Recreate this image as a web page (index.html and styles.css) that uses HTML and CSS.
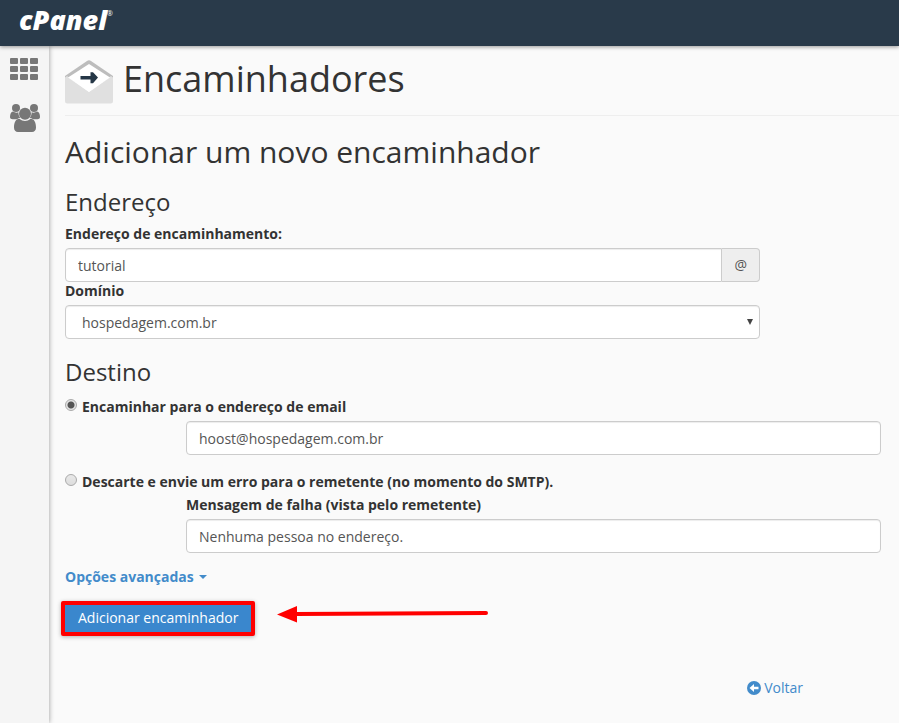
FILE: index.html
```html
<!DOCTYPE html>
<html lang="pt-BR">
<head>
  <meta charset="UTF-8">
  <meta name="viewport" content="width=device-width, initial-scale=1.0">
  <title>cPanel - Encaminhadores</title>
  <link rel="stylesheet" href="styles.css">
</head>
<body>
  <header class="topbar">
    <a class="logo" href="#">cPanel<sup>®</sup></a>
  </header>

  <div class="layout">
    <nav class="sidebar">
      <a href="#" aria-label="Home">
        <svg width="30" height="24" viewBox="0 0 30 24" fill="#777">
          <rect x="0" y="0" width="8" height="6" rx="1"/>
          <rect x="10" y="0" width="8" height="6" rx="1"/>
          <rect x="20" y="0" width="8" height="6" rx="1"/>
          <rect x="0" y="8" width="8" height="6" rx="1"/>
          <rect x="10" y="8" width="8" height="6" rx="1"/>
          <rect x="20" y="8" width="8" height="6" rx="1"/>
          <rect x="0" y="16" width="8" height="6" rx="1"/>
          <rect x="10" y="16" width="8" height="6" rx="1"/>
          <rect x="20" y="16" width="8" height="6" rx="1"/>
        </svg>
      </a>
      <a href="#" aria-label="User Manager">
        <svg width="30" height="30" viewBox="0 0 30 30" fill="#777">
          <circle cx="6" cy="5" r="4"/>
          <circle cx="24" cy="5" r="4"/>
          <path d="M3 8.500C1 8.500 0 11 0 14C0 15.500 1.200 16.200 2.600 16.200H7C8 15.400 9.300 15 10.200 14.800C9 13.300 8.300 11.500 8.400 9.300C6.500 10 4.500 9.500 3 8.500Z"/>
          <path d="M27 8.500C29 8.500 30 11 30 14C30 15.500 28.800 16.200 27.400 16.200H23C22 15.400 20.700 15 19.800 14.800C21 13.300 21.700 11.500 21.600 9.300C23.500 10 25.500 9.500 27 8.500Z"/>
          <circle cx="15" cy="10.800" r="6"/>
          <path d="M9.500 15.800C5.500 15.800 4 20 4 24.500C4 27.400 5.600 29 8 29H22C24.400 29 26 27.400 26 24.500C26 20 24.500 15.800 20.500 15.800C17 18.700 13 18.700 9.500 15.800Z"/>
        </svg>
      </a>
    </nav>

    <main class="content">
      <h1 class="page-title">
        <svg width="48" height="44" viewBox="0 0 48 44">
          <path d="M0 16L22 1Q24 -0.300 26 1L48 16V22H0Z" fill="#bdbdbd"/>
          <path d="M0 17.500L2 16L24 32L46 16L48 17.500V41Q48 43.500 45.500 43.500H2.500Q0 43.500 0 41Z" fill="#e0e0e0"/>
          <path d="M24 4L45 17.500L24 32L3 17.500Z" fill="#fff"/>
          <path d="M15.500 16H25.500V12.300H28L33 17.500L28 23.200H25.500V19.500H15.500Z" fill="#253746"/>
        </svg>
        <span>Encaminhadores</span>
      </h1>

      <h2>Adicionar um novo encaminhador</h2>

      <form>
        <h3>Endereço</h3>
        <div class="field">
          <label for="email">Endereço de encaminhamento:</label>
          <div class="input-group">
            <input class="form-control" type="text" id="email" value="tutorial">
            <span class="addon">@</span>
          </div>
        </div>
        <div class="field">
          <label for="domain">Domínio</label>
          <div class="select-wrap">
            <select class="form-control" id="domain">
              <option>hospedagem.com.br</option>
            </select>
          </div>
        </div>

        <h3>Destino</h3>
        <div class="radio">
          <input type="radio" name="fwdopt" id="fwd" checked>
          <label for="fwd">Encaminhar para o endereço de email</label>
        </div>
        <div class="field nested">
          <input class="form-control" type="text" aria-label="Endereço de email" value="hoost@hospedagem.com.br">
        </div>

        <div class="radio fail">
          <input type="radio" name="fwdopt" id="fail">
          <label for="fail">Descarte e envie um erro para o remetente (no momento do SMTP).</label>
        </div>
        <div class="field nested">
          <label for="failmsg">Mensagem de falha (vista pelo remetente)</label>
          <input class="form-control" type="text" id="failmsg" value="Nenhuma pessoa no endereço.">
        </div>

        <a class="advanced" href="#">Opções avançadas <span class="caret"></span></a>

        <div class="actions">
          <button class="btn-primary" type="submit">Adicionar encaminhador</button>
          <svg class="arrow" width="212" height="20" viewBox="0 0 212 20">
            <path d="M0 10.500L20 2V18.500Z" fill="#f00"/>
            <path d="M18 10L209 9" stroke="#f00" stroke-width="4" stroke-linecap="round"/>
          </svg>
        </div>
      </form>

      <div class="back">
        <a href="#">
          <svg width="14" height="14" viewBox="0 0 14 14">
            <circle cx="7" cy="7" r="7" fill="#428bca"/>
            <path d="M2.500 7L7 3V5.700H11.500V8.300H7V11Z" fill="#fff"/>
          </svg>
          Voltar
        </a>
      </div>
    </main>
  </div>
</body>
</html>
```
FILE: styles.css
```css
* {
  box-sizing: border-box;
}

body {
  margin: 0;
  font-family: "Open Sans", "Liberation Sans", sans-serif;
  font-size: 14px;
  line-height: 20px;
  color: #333;
  background-color: #fafafa;
}

a {
  color: #428bca;
  text-decoration: none;
}

svg {
  display: block;
  flex: none;
}

.topbar {
  position: relative;
  z-index: 1;
  display: flex;
  height: 46px;
  padding: 0 19px;
  background-color: #293a4a;
  box-shadow: 0 1px 4px rgba(0, 0, 0, 0.4);
}

.logo {
  font-size: 27px;
  font-style: italic;
  font-weight: 800;
  line-height: 40px;
  color: #fff;
}

.logo sup {
  font-size: 7px;
  font-weight: 400;
  line-height: 0;
  vertical-align: 14px;
}

.layout {
  display: flex;
  min-height: calc(100vh - 46px);
}

.sidebar {
  display: flex;
  flex: none;
  flex-direction: column;
  gap: 21px;
  width: 49px;
  padding: 12px 9px 12px 10px;
  background-color: #f5f5f5;
  box-shadow: 0 0 5px rgba(0, 0, 0, 0.4);
}

.content {
  flex: 1;
  min-width: 0;
  padding: 14px 0 0 16px;
}

h1,
h2,
h3 {
  margin: 0;
  font-weight: 400;
}

.page-title {
  display: flex;
  align-items: flex-start;
  gap: 10px;
  height: 56px;
  border-bottom: 1px solid #eee;
  font-size: 36px;
  line-height: 38px;
}

h2 {
  margin: 19px 0 21px;
  font-size: 30px;
  line-height: 33px;
}

h3 {
  margin: 20px 0 10px;
  font-size: 24px;
  line-height: 26px;
}

.field {
  width: 83.33%;
}

.nested {
  margin-left: 121px;
}

label {
  display: block;
  margin-bottom: 5px;
  font-weight: 700;
  line-height: 18px;
}

.form-control {
  display: block;
  width: 100%;
  height: 34px;
  padding: 6px 12px;
  border: 1px solid #ccc;
  border-radius: 4px;
  font: inherit;
  color: #555;
  background-color: #fff;
  box-shadow: inset 0 1px 1px rgba(0, 0, 0, 0.075);
}

.input-group {
  display: flex;
}

.input-group .form-control {
  border-radius: 4px 0 0 4px;
}

.addon {
  padding: 6px 12px;
  border: 1px solid #ccc;
  border-left: 0;
  border-radius: 0 4px 4px 0;
  color: #555;
  background-color: #eee;
}

.select-wrap {
  position: relative;
}

.select-wrap::after {
  content: "";
  position: absolute;
  top: 14px;
  right: 7px;
  border-top: 6px solid #444;
  border-right: 3px solid transparent;
  border-left: 3px solid transparent;
  pointer-events: none;
}

select.form-control {
  padding: 7px 16px 5px;
  appearance: none;
}

.radio {
  display: flex;
  gap: 5px;
  padding-top: 2px;
}

.radio label {
  margin-bottom: 4px;
  line-height: 20px;
}

.radio input {
  width: 12px;
  height: 12px;
  margin: 2px 0 0;
  border: 1px solid #aaa;
  border-radius: 50%;
  background: linear-gradient(#e8e8e8, #ddd);
  appearance: none;
}

.radio input:checked {
  background: radial-gradient(circle, #555 3px, #e4e4e4 4px);
}

.fail {
  margin-top: 15px;
}

.advanced {
  display: inline-flex;
  align-items: center;
  gap: 5px;
  margin: 14px 0;
  font-weight: 700;
}

.caret {
  border-top: 4px solid;
  border-right: 4px solid transparent;
  border-left: 4px solid transparent;
}

.actions {
  display: flex;
  align-items: flex-start;
  gap: 22px;
  margin-left: -4px;
}

.btn-primary {
  height: 35px;
  padding: 0 13px 1px;
  border: 4px solid #f00;
  border-radius: 2px;
  font: inherit;
  color: #fff;
  background-color: #3a87cd;
  box-shadow: 0 1px 4px rgba(0, 0, 0, 0.3);
}

.arrow {
  margin-top: 3px;
}

.back {
  display: flex;
  justify-content: flex-end;
  margin-top: 42px;
  padding-right: 96px;
}

.back a {
  display: flex;
  align-items: center;
  gap: 3px;
}
```
